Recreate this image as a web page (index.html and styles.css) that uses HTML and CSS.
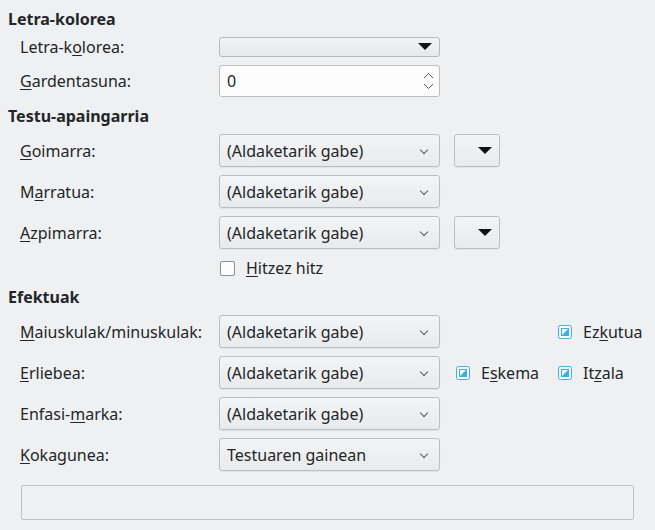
FILE: index.html
```html
<!DOCTYPE html>
<html lang="eu">
  <head>
    <meta charset="UTF-8" />
    <title>Letra-efektuak</title>
    <link rel="stylesheet" href="styles.css">
  </head>
  <body>
    <div class="page">
      <!-- Letra-kolorea -->
      <div class="section-title">Letra-kolorea</div>

      <div class="label">Letra-k<u>o</u>lorea:</div>
      <div class="color-button">
        <svg width="14" height="8" viewBox="0 0 14 8"><polygon points="0,0 14,0 7,7" fill="#111"/></svg>
      </div>
      <div></div><div></div>

      <div class="label"><u>G</u>ardentasuna:</div>
      <div class="spinbox">
        <span>0</span>
        <svg width="11" height="18" viewBox="0 0 11 18">
          <polyline points="1,6 5.5,1.5 10,6" fill="none" stroke="#555" stroke-width="1"/>
          <polyline points="1,12 5.5,16.5 10,12" fill="none" stroke="#555" stroke-width="1"/>
        </svg>
      </div>
      <div></div><div></div>

      <!-- Testu-apaingarria -->
      <div class="section-title second">Testu-apaingarria</div>

      <div class="label"><u>G</u>oimarra:</div>
      <div class="combo">(Aldaketarik gabe)</div>
      <div class="extra"><div class="small-button"><svg width="14" height="8" viewBox="0 0 14 8"><polygon points="0,0 14,0 7,7" fill="#111"/></svg></div></div>
      <div></div>

      <div class="label">M<u>a</u>rratua:</div>
      <div class="combo">(Aldaketarik gabe)</div>
      <div></div><div></div>

      <div class="label"><u>A</u>zpimarra:</div>
      <div class="combo">(Aldaketarik gabe)</div>
      <div class="extra"><div class="small-button"><svg width="14" height="8" viewBox="0 0 14 8"><polygon points="0,0 14,0 7,7" fill="#111"/></svg></div></div>
      <div></div>

      <div></div>
      <div class="check-row">
        <span class="checkbox"></span>
        <span><u>H</u>itzez hitz</span>
      </div>
      <div></div><div></div>

      <!-- Efektuak -->
      <div class="section-title">Efektuak</div>

      <div class="label"><u>M</u>aiuskulak/minuskulak:</div>
      <div class="combo">(Aldaketarik gabe)</div>
      <div></div>
      <div class="check-row last">
        <svg width="14" height="14" viewBox="0 0 14 14"><rect x="0.5" y="0.5" width="13" height="13" rx="2" fill="#fcfcfc" stroke="#3daee9"/><rect x="3.5" y="3.5" width="7" height="7" fill="none" stroke="#3daee9"/><polygon points="10,4 10,10 4,10" fill="#3daee9"/></svg>
        <span>Ez<u>k</u>utua</span>
      </div>

      <div class="label"><u>E</u>rliebea:</div>
      <div class="combo">(Aldaketarik gabe)</div>
      <div class="check-row first">
        <svg width="14" height="14" viewBox="0 0 14 14"><rect x="0.5" y="0.5" width="13" height="13" rx="2" fill="#fcfcfc" stroke="#3daee9"/><rect x="3.5" y="3.5" width="7" height="7" fill="none" stroke="#3daee9"/><polygon points="10,4 10,10 4,10" fill="#3daee9"/></svg>
        <span>E<u>s</u>kema</span>
      </div>
      <div class="check-row last">
        <svg width="14" height="14" viewBox="0 0 14 14"><rect x="0.5" y="0.5" width="13" height="13" rx="2" fill="#fcfcfc" stroke="#3daee9"/><rect x="3.5" y="3.5" width="7" height="7" fill="none" stroke="#3daee9"/><polygon points="10,4 10,10 4,10" fill="#3daee9"/></svg>
        <span>It<u>z</u>ala</span>
      </div>

      <div class="label">Enfasi-<u>m</u>arka:</div>
      <div class="combo">(Aldaketarik gabe)</div>
      <div></div><div></div>

      <div class="label"><u>K</u>okagunea:</div>
      <div class="combo">Testuaren gainean</div>
      <div></div><div></div>

      <div class="preview"></div>
    </div>
  </body>
</html>
```

FILE: styles.css
```css
body {
  margin: 0;
  background-color: #eff0f1;
  color: #232629;
  font-family: "Noto Sans", sans-serif;
  font-size: 16px;
  line-height: 20px;
}

u {
  text-decoration-thickness: 1px;
  text-underline-offset: 2px;
}

.page {
  display: grid;
  grid-template-columns: 211px 221px 116px minmax(0, 1fr);
  row-gap: 8px;
  padding: 9px 21px 10px 8px;
  width: 626px;
}

.section-title {
  grid-column: 1 / -1;
  font-weight: bold;
  height: 20px;
}

.section-title.second {
  margin-top: 1px;
}

.label {
  padding-left: 12px;
  display: flex;
  align-items: center;
  white-space: nowrap;
}

.color-button {
  height: 18px;
  border: 1px solid #b8babc;
  border-radius: 3px;
  background: linear-gradient(#f2f3f4, #e7e8e9);
  display: flex;
  align-items: center;
  justify-content: flex-end;
  padding-right: 7px;
}

.spinbox {
  height: 30px;
  border: 1px solid #bcbebf;
  border-radius: 3px;
  background-color: #fcfcfc;
  display: flex;
  align-items: center;
  justify-content: space-between;
  padding: 0 5px 0 7px;
}

.combo {
  height: 31px;
  border: 1px solid #bcbebf;
  border-radius: 3px;
  background: linear-gradient(#f3f4f5, #e9eaeb);
  box-shadow: 0 1px 1px rgba(0, 0, 0, 0.06);
  display: flex;
  align-items: center;
  padding-left: 7px;
  position: relative;
  white-space: nowrap;
}

.combo::after {
  content: "";
  position: absolute;
  right: 12px;
  top: 12px;
  width: 5px;
  height: 5px;
  border-right: 1px solid #5a5c5e;
  border-bottom: 1px solid #5a5c5e;
  transform: rotate(45deg);
}

.extra {
  padding-left: 14px;
  display: flex;
  align-items: center;
}

.small-button {
  box-sizing: border-box;
  width: 46px;
  height: 33px;
  border: 1px solid #bcbebf;
  border-radius: 3px;
  background: linear-gradient(#f3f4f5, #e9eaeb);
  box-shadow: 0 1px 1px rgba(0, 0, 0, 0.06);
  display: flex;
  align-items: center;
  justify-content: flex-end;
  padding-right: 7px;
}

.check-row {
  height: 22px;
  display: flex;
  align-items: center;
  gap: 11px;
  white-space: nowrap;
  padding-left: 1px;
  align-self: center;
}

.check-row svg {
  flex-shrink: 0;
}

.check-row.first {
  padding-left: 16px;
}

.check-row.last {
  padding-left: 2px;
}

.checkbox {
  flex-shrink: 0;
  width: 13px;
  height: 13px;
  border: 1px solid #8e9092;
  border-radius: 2px;
  background-color: #fcfcfc;
}

.preview {
  grid-column: 1 / -1;
  margin-top: 6px;
  margin-left: 13px;
  height: 33px;
  border: 1px solid #c0c2c4;
  border-radius: 2px;
}
```
